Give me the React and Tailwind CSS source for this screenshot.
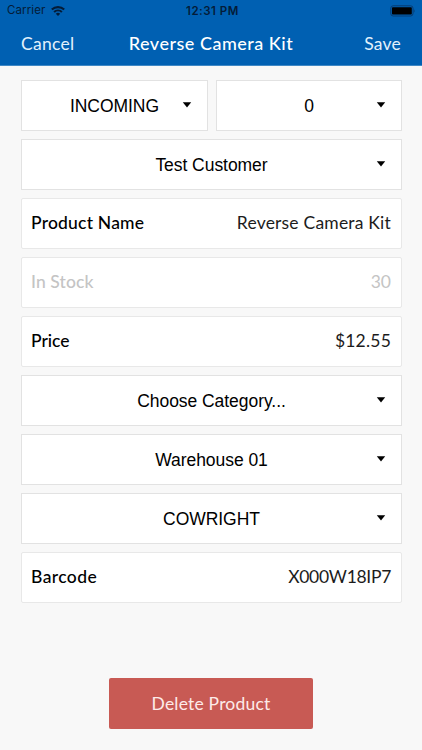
import React from 'react';
import clsx from 'clsx';

const rows = [
    { type: 'select', value: 'Test Customer' },
    { type: 'field', label: 'Product Name', value: 'Reverse Camera Kit', labelTracking: 'tracking-[0.2px]', tracking: 'tracking-[0.2px]' },
    { type: 'field', label: 'In Stock', value: '30', disabled: true, labelTracking: 'tracking-[0.1px]' },
    { type: 'field', label: 'Price', value: '$12.55', labelTracking: 'tracking-[0px]', tracking: 'tracking-[0.2px]' },
    { type: 'select', value: 'Choose Category...' },
    { type: 'select', value: 'Warehouse 01' },
    { type: 'select', value: 'COWRIGHT' },
    { type: 'field', label: 'Barcode', value: 'X000W18IP7', labelTracking: 'tracking-[0.4px]', tracking: 'tracking-[-0.3px]' },
];

const StatusBar = () => (
    <div className="h-[22px] grid grid-cols-3 items-center pl-[7px] pr-[7px] font-['Inter','Roboto',sans-serif] text-[11px] text-[#041c38]">
        <div className="flex items-center gap-[6px]">
            <span className="text-[11.5px] tracking-[0.1px]">Carrier</span>
            <svg width="14" height="10" viewBox="0 0 14 10" fill="none" stroke="currentColor" strokeWidth="2.1">
                <path d="M0.8 3.6 A9 9 0 0 1 13.2 3.6" />
                <path d="M3.1 6 A5.7 5.7 0 0 1 10.9 6" />
                <path d="M7 10 L4.8 7.8 A3.2 3.2 0 0 1 9.2 7.8 Z" fill="currentColor" stroke="none" />
            </svg>
        </div>
        <span className="text-center text-[11.5px] font-semibold tracking-[0.5px] whitespace-nowrap pl-[3px] pt-px">12:31 PM</span>
        <svg className="justify-self-end" width="25" height="12" viewBox="0 0 25 12">
            <rect x="0.8" y="0.8" width="22.2" height="10.2" rx="2.4" fill="none" stroke="#063c72" strokeWidth="1" />
            <rect x="2" y="2.2" width="19.8" height="7.4" rx="0.8" fill="#000" />
            <path d="M23.8 4 Q25.4 5.9 23.8 7.8 Z" fill="#063c72" />
        </svg>
    </div>
);

const Select = ({ value, className }) => (
    <button className={clsx("h-[51px] grid grid-cols-[1fr_auto_1fr] items-center bg-white border border-[#e2e2e2] px-[15px] font-['Liberation_Sans',Arial,sans-serif] text-[17.5px] tracking-[-0.05px] text-black", className)}>
        <span />
        <span className="whitespace-nowrap pt-px">{value}</span>
        <svg className="justify-self-end -mt-px" width="10" height="6" viewBox="0 0 10 6">
            <path d="M0.8 0.3 H9.2 L5 5.6 Z" fill="#000" />
        </svg>
    </button>
);

const Field = ({ label, value, disabled, labelTracking, tracking }) => (
    <div className={clsx('h-[51px] flex items-center justify-between bg-white border border-[#e8e8e8] rounded-[2px] pl-[9px] pr-[10px] text-[17.5px]', disabled ? 'text-[#c4c4c4]' : 'text-black')}>
        <span className={clsx('font-medium', labelTracking)}>{label}</span>
        <span className={clsx(tracking, !disabled && 'text-[#1c1c1c]')}>{value}</span>
    </div>
);

const App = () => (
    <div className="h-[750px] flex flex-col bg-[#f8f8f8] font-['Lato',sans-serif]">
        <header className="h-[66px] bg-[#0060b2] border-b border-[#3f88c5]">
            <StatusBar />
            <div className="h-[43px] grid grid-cols-[1fr_auto_1fr] items-center px-[21px] text-[17.5px] text-[#e2f1fc]">
                <button className="justify-self-start pt-px tracking-[0.3px]">Cancel</button>
                <h1 className="font-medium text-[18px] text-white tracking-[0.5px]">Reverse Camera Kit</h1>
                <button className="justify-self-end pt-px tracking-[0.2px]">Save</button>
            </div>
        </header>

        <main className="flex flex-col gap-2 pt-[14px] pl-[21px] pr-[20px]">
            <div className="flex gap-2">
                <Select value="INCOMING" className="w-[187px]" />
                <Select value="0" className="flex-1" />
            </div>
            {rows.map(row => row.type === 'select'
                ? <Select key={row.value} value={row.value} />
                : <Field key={row.label} {...row} />
            )}
        </main>

        <button className="mt-auto mb-[21px] mx-auto w-[204px] h-[51px] rounded-[2px] bg-[#c85a54] pt-px text-[17.5px] text-[#fdebe9] tracking-[0.2px]">
            Delete Product
        </button>
    </div>
);

export default App;
